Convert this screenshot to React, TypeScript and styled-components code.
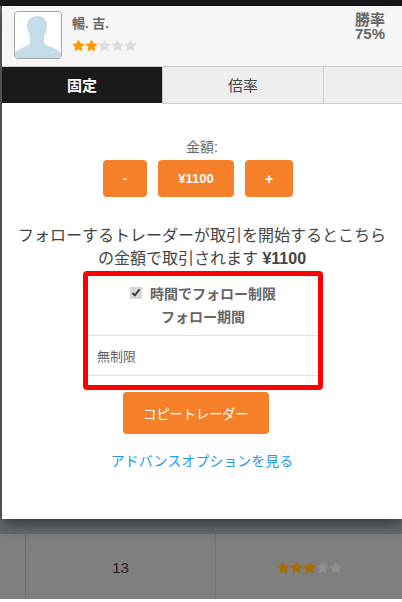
import React from 'react'
import styled, { createGlobalStyle } from 'styled-components'

const GlobalStyle = createGlobalStyle`
  html, body {
    margin: 0;
    padding: 0;
    background: #fff;
  }
  * {
    box-sizing: border-box;
  }
`

const FONT = `"Liberation Sans", Arial, "Noto Sans CJK JP", sans-serif`
const ORANGE = '#f6802a'

/*
 * STYLES
 */

const Page = styled.div`
  width: 402px;
  height: 602px;
  overflow: hidden;
  background: #fff;
  font-family: ${FONT};
  color: #555;
`

const Backdrop = styled.div`
  height: 599px;
  background: #7f7f7f;
  display: flex;
  flex-direction: column;
`

const TopBand = styled.div`
  background: #666a6e;
  flex-shrink: 0;
`

const TopBar = styled.div`
  height: 6px;
  background: #1a1a1a;
`

const Modal = styled.div`
  width: 400px;
  height: 513px;
  margin-left: 2px;
  background: #fff;
  box-shadow: 0 5px 15px rgba(0, 0, 0, 0.5);
  position: relative;
`

const Header = styled.div`
  height: 60px;
  background: #f6f6f6;
  display: flex;
  padding: 5px 17px 0 12px;
`

const Avatar = styled.div`
  width: 48px;
  height: 48px;
  border: 1px solid #a6a6a6;
  border-radius: 4px;
  background: #fff;
  overflow: hidden;
  flex-shrink: 0;
`

const TraderInfo = styled.div`
  margin-left: 10px;
  flex: 1;
  padding-top: 5px;
`

const TraderName = styled.div`
  font-size: 13px;
  font-weight: 700;
  line-height: 16px;
  color: #666;
  margin-bottom: 7px;
`

const StarRow = styled.div`
  display: flex;
`

const WinRate = styled.div`
  font-size: 15px;
  font-weight: 700;
  line-height: 14px;
  text-align: center;
  color: #666;
  padding-top: 2px;
`

const Tabs = styled.div`
  display: flex;
  height: 38px;
  border-top: 1px solid #ccc;
`

const Tab = styled.div<{ $active?: boolean }>`
  width: 161px;
  height: ${(p) => (p.$active ? '36px' : '37px')};
  background: ${(p) => (p.$active ? '#1a1a1a' : '#eee')};
  color: ${(p) => (p.$active ? '#fff' : '#444')};
  font-size: 15px;
  font-weight: ${(p) => (p.$active ? 700 : 400)};
  display: flex;
  align-items: center;
  justify-content: center;
  padding-bottom: 2px;
  border-right: 1px solid #ccc;
  border-bottom: ${(p) => (p.$active ? 'none' : '1px solid #ccc')};
`

const TabFill = styled.div`
  flex: 1;
  height: 37px;
  background: #eee;
  border-bottom: 1px solid #ccc;
`

const Body = styled.div`
  display: flex;
  flex-direction: column;
  align-items: center;
  padding-top: 35px;
`

const AmountLabel = styled.div`
  font-size: 14px;
  line-height: 16px;
  color: #666;
`

const Stepper = styled.div`
  display: flex;
  gap: 11px;
  margin-top: 5px;
  margin-right: 8px;
`

const StepButton = styled.div<{ $width: number; $large?: boolean }>`
  width: ${(p) => p.$width}px;
  height: 37px;
  background: ${ORANGE};
  border-radius: 4px;
  color: #fff;
  font-size: ${(p) => (p.$large ? 14 : 13)}px;
  font-weight: 700;
  display: flex;
  align-items: center;
  justify-content: center;
`

const Note = styled.p`
  margin: 27px 0 0;
  width: 372px;
  font-size: 16px;
  line-height: 23px;
  color: #444;
  text-align: center;
`

const Amount = styled.strong`
  font-weight: 700;
`

const Highlight = styled.div`
  width: 240px;
  height: 119px;
  margin-top: 1px;
  margin-left: 2px;
  border: 5px solid #f00;
  border-radius: 4px;
  background: #fff;
`

const CheckRow = styled.label`
  display: flex;
  align-items: center;
  justify-content: center;
  height: 33px;
  padding-top: 1px;
  gap: 8px;
  font-size: 14px;
  font-weight: 700;
  color: #666;
`

const Check = styled.input`
  margin: 0;
  width: 12px;
  height: 12px;
  accent-color: #d8d8d8;
`

const PeriodTitle = styled.div`
  font-size: 14px;
  font-weight: 700;
  line-height: 16px;
  text-align: center;
  color: #666;
`

const PeriodValue = styled.div`
  margin-top: 10px;
  height: 41px;
  border-top: 1px solid #e4e4e4;
  border-bottom: 1px solid #e4e4e4;
  padding-left: 9px;
  display: flex;
  align-items: center;
  font-size: 13px;
  color: #666;
`

const CopyButton = styled.div`
  width: 146px;
  height: 42px;
  margin-top: 2px;
  margin-right: 12px;
  background: ${ORANGE};
  border-radius: 4px;
  color: #fff;
  font-size: 13.2px;
  font-weight: 400;
  display: flex;
  align-items: center;
  justify-content: center;
`

const AdvancedLink = styled.a`
  margin-top: 18px;
  font-size: 14px;
  line-height: 18px;
  color: #1e9bea;
  text-decoration: none;
`

const TableRow = styled.div<{ $height: number }>`
  height: ${(p) => p.$height}px;
  display: grid;
  grid-template-columns: 26px 190px 1fr;
  color: #222;
  font-size: 15px;
`

const TableCell = styled.div`
  border-right: 1px solid #707070;
  display: flex;
  align-items: center;
  justify-content: center;
  padding-top: 2px;

  &:last-child {
    border-right: none;
  }
`

/*
 * ICONS
 */

const STAR =
  'M6.5 0.4 L8.5 4.3 L12.8 5 L9.7 8 L10.4 12.4 L6.5 10.3 L2.6 12.4 L3.3 8 L0.2 5 L4.5 4.3 Z'

const Star = ({ color }: { color: string }) => (
  <svg width="13" height="13" viewBox="0 0 13 13">
    <path d={STAR} fill={color} />
  </svg>
)

const Stars = ({ filled, on, off }: { filled: number; on: string; off: string }) => (
  <StarRow>
    {[0, 1, 2, 3, 4].map((i) => (
      <Star key={i} color={i < filled ? on : off} />
    ))}
  </StarRow>
)

const Silhouette = () => (
  <svg width="46" height="46" viewBox="0 0 46 46">
    <path
      d="M22.5 4 C16 4 12 8 12 13 C12 17 13 20 14.5 22 L15 30 C15 33 12 34 9 35 C6 37 2 38 0 41 L0 46 L46 46 L46 41 C44 38 40 37 37 35 C33 34 29 33 29 30 L29 24 C31 21 32 17 32 13 C32 8 29 4 22.5 4 Z"
      fill="#c5dce9"
    />
  </svg>
)

/*
 * COMPONENT
 */

const App = () => (
  <Page>
    <GlobalStyle />
    <Backdrop>
      <TopBand>
        <TopBar />
        <Modal>
          <Header>
            <Avatar>
              <Silhouette />
            </Avatar>
            <TraderInfo>
              <TraderName>暢. 吉.</TraderName>
              <Stars filled={2} on="#f90" off="#ddd" />
            </TraderInfo>
            <WinRate>
              勝率
              <br />
              75%
            </WinRate>
          </Header>
          <Tabs>
            <Tab $active>固定</Tab>
            <Tab>倍率</Tab>
            <TabFill />
          </Tabs>
          <Body>
            <AmountLabel>金額:</AmountLabel>
            <Stepper>
              <StepButton $width={44}>-</StepButton>
              <StepButton $width={76}>¥1100</StepButton>
              <StepButton $width={48} $large>
                +
              </StepButton>
            </Stepper>
            <Note>
              フォローするトレーダーが取引を開始するとこちらの金額で取引されます <Amount>¥1100</Amount>
            </Note>
            <Highlight>
              <CheckRow>
                <Check type="checkbox" defaultChecked />
                時間でフォロー制限
              </CheckRow>
              <PeriodTitle>フォロー期間</PeriodTitle>
              <PeriodValue>無制限</PeriodValue>
            </Highlight>
            <CopyButton>コピートレーダー</CopyButton>
            <AdvancedLink href="#">アドバンスオプションを見る</AdvancedLink>
          </Body>
        </Modal>
        <TableRow $height={15}>
          <TableCell />
          <TableCell />
          <TableCell />
        </TableRow>
      </TopBand>
      <TableRow $height={65}>
        <TableCell />
        <TableCell>13</TableCell>
        <TableCell>
          <Stars filled={3} on="#a86c00" off="#8f8f8f" />
        </TableCell>
      </TableRow>
    </Backdrop>
  </Page>
)

export default App
